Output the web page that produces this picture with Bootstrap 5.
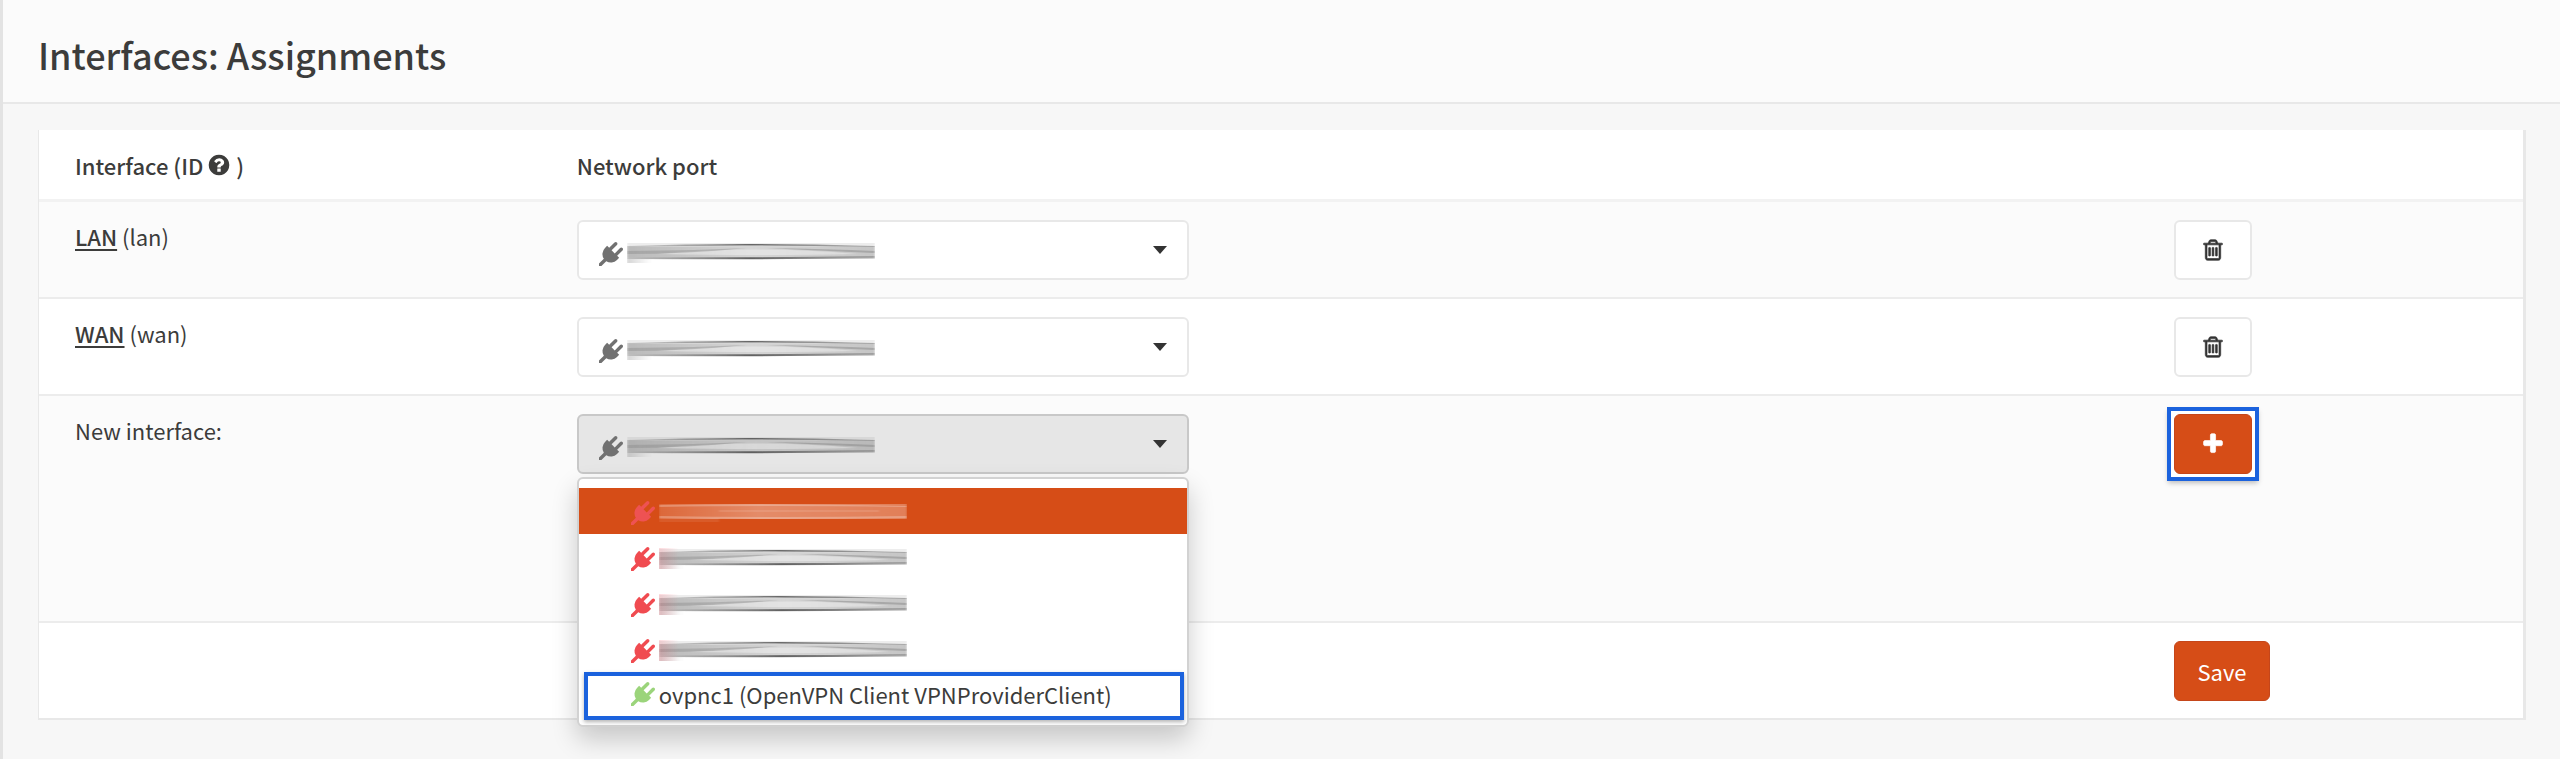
<!DOCTYPE html>
<html lang="en">
<head>
<meta charset="utf-8">
<meta name="viewport" content="width=device-width, initial-scale=1">
<title>Interfaces: Assignments</title>
<link href="https://cdn.jsdelivr.net/npm/bootstrap@5.3.0/dist/css/bootstrap.min.css" rel="stylesheet">
<style>
  :root { --brand: #d64d17; --ink: #3c3c3b; --mark-blue: #1b62dd; }
  body {
    font-family: "Noto Sans CJK SC", "Noto Sans", sans-serif;
    font-size: 22px; line-height: 30px; color: var(--ink);
    background: #f7f7f7; border-left: 3px solid #e3e3e3; min-height: 100vh;
  }
  .page-head { background: #fbfbfb; border-bottom: 2px solid #e8e8e8; padding: 31px 35px 25px; }
  .page-head h1 { font-size: 36px; line-height: 46px; font-weight: 500; }
  .page-body { padding: 26px 34px 40px 35px; }
  .panel-box { background: #fff; border: solid #e8e8e8; border-width: 0 3px 2px 1px; }
  .assign { --bs-table-bg: transparent; color: var(--ink); table-layout: fixed; }
  .assign > :not(caption) > * > * { padding: 18px 0 17px 36px; border-color: #ececec; border-bottom-width: 2px; color: var(--ink); }
  .assign > thead > tr > th { padding-top: 20px; padding-bottom: 19px; font-weight: 500; border-bottom-width: 3px; border-color: #f2f2f2; }
  .assign > tbody > tr > td:first-child { padding-top: 19px; }
  .assign > tbody > tr:nth-child(odd) { background: #fbfbfb; }
  .assign > tbody > tr:last-child > td { border-bottom-width: 0; }
  .col-name { width: 20.2%; }
  .col-port { width: 64.3%; }
  .fa-ico { width: 24px; height: 24px; fill: currentColor; flex: none; display: block; }
  .port-link { color: inherit; font-weight: 500; text-underline-offset: 3px; text-decoration-thickness: 2px; }
  .picker { width: 612px; max-width: 100%; }
  .picker .form-select, .note-field {
    height: 60px; border: 2px solid #e8e8e8; border-radius: 6px; font-size: 22px; box-shadow: none;
  }
  .picker .form-select {
    background-color: #fff; background-position: right 20px center; background-size: 14px 8px;
    background-image: url("data:image/svg+xml,%3Csvg xmlns='http://www.w3.org/2000/svg' viewBox='0 0 14 8' preserveAspectRatio='none'%3E%3Cpath d='M0 0h14L7 8z' fill='%23333'/%3E%3C/svg%3E");
  }
  .picker .form-select.is-open { background-color: #e6e6e6; border-color: #c8c8c8; }
  .picked { position: absolute; top: 22px; left: 22px; color: #717171; pointer-events: none; }
  .smear { width: 248px; height: 22px; display: block; }
  .note-field { width: 612px; max-width: 100%; border-color: #bdbdbd; margin-top: 44px; margin-bottom: 26px; }
  .port-menu {
    top: 63px; left: 0; width: 100%; padding: 9px 0 5px; font-size: 22px;
    border: 2px solid #d2d2d2; border-radius: 6px; box-shadow: 0 12px 26px rgba(0,0,0,.2);
  }
  .port-menu .dropdown-item { height: 46px; padding: 4px 0 0 52px; color: var(--ink); }
  .port-menu .dropdown-item.active { background: var(--brand); }
  .port-menu .marked { height: 48px; margin: 0 3px 0 5px; width: auto; padding: 0 0 4px 43px; border: 4px solid var(--mark-blue); box-shadow: 0 2px 4px rgba(0,0,0,.3); }
  .c-down { color: #f04b50; }
  .c-up { color: #9bd47b; }
  .active .c-down { color: #ee5253; }
  .btn-tool { height: 60px; width: 78px; border: 2px solid #e8e8e8; border-radius: 6px; background: #fff; color: #333; padding: 0; }
  .btn-tool .fa-ico { stroke: currentColor; stroke-width: 50; }
  .btn-brand { background: var(--brand); border: 1px solid #c5461a; border-radius: 6px; color: #fff; }
  .btn-save { height: 60px; width: 96px; padding: 0; font-size: 22px; }
  .halo { width: 78px; background: #fff; outline: 4px solid var(--mark-blue); outline-offset: 3px; box-shadow: 0 0 0 3px #fff, 0 3px 5px 6px rgba(0,0,0,.25); }
</style>
</head>
<body>
<svg class="d-none" aria-hidden="true">
  <defs>
    <symbol id="plug" viewBox="0 0 1792 1792"><path d="M1755 453q37 38 37 90.500t-37 90.500l-401 400 150 150-160 160q-163 163-389.500 186.500t-411.500-100.500l-362 362h-181v-181l362-362q-124-185-100.500-411.500t186.500-389.500l160-160 150 150 400-401q38-37 91-37t90 37 37 90.500-37 90.500l-400 401 234 234 401-400q38-37 91-37t90 37z"/></symbol>
    <symbol id="trash" viewBox="0 0 1792 1792"><path d="M704 736v576q0 14-9 23t-23 9h-64q-14 0-23-9t-9-23v-576q0-14 9-23t23-9h64q14 0 23 9t9 23zm256 0v576q0 14-9 23t-23 9h-64q-14 0-23-9t-9-23v-576q0-14 9-23t23-9h64q14 0 23 9t9 23zm256 0v576q0 14-9 23t-23 9h-64q-14 0-23-9t-9-23v-576q0-14 9-23t23-9h64q14 0 23 9t9 23zm128 724v-948h-896v948q0 22 7 40.500t14.500 27 10.500 8.500h832q3 0 10.500-8.500t14.500-27 7-40.500zm-672-1076h448l-48-117q-7-9-17-11h-317q-10 2-17 11zm928 32v64q0 14-9 23t-23 9h-96v948q0 83-47 143.500t-113 60.500h-832q-66 0-113-58.500t-47-141.500v-952h-96q-14 0-23-9t-9-23v-64q0-14 9-23t23-9h309l70-167q15-37 54-63t79-26h320q40 0 79 26t54 63l70 167h309q14 0 23 9t9 23z"/></symbol>
    <symbol id="plus" viewBox="0 0 1792 1792"><path d="M1600 736v192q0 40-28 68t-68 28h-416v416q0 40-28 68t-68 28h-192q-40 0-68-28t-28-68v-416h-416q-40 0-68-28t-28-68v-192q0-40 28-68t68-28h416v-416q0-40 28-68t68-28h192q40 0 68 28t28 68v416h416q40 0 68 28t28 68z"/></symbol>
    <symbol id="question" viewBox="0 0 1792 1792"><path d="M1024 1376v-192q0-14-9-23t-23-9h-192q-14 0-23 9t-9 23v192q0 14 9 23t23 9h192q14 0 23-9t9-23zm256-672q0-88-55.500-163t-138.500-116-170-41q-243 0-371 213-15 24 8 42l132 100q7 6 19 6 16 0 25-12 53-68 86-92 34-24 86-24 48 0 85.500 26t37.500 59q0 38-20 61t-68 45q-63 28-115.500 86.500t-52.500 125.500v36q0 14 9 23t23 9h192q14 0 23-9t9-23q0-19 21.500-49.500t54.500-49.500q32-18 49-28.500t46-35 44.500-48 28-60.500 12.500-81zm384 192q0 209-103 385.500t-279.500 279.500-385.500 103-385.500-103-279.500-279.500-103-385.500 103-385.500 279.500-279.500 385.500-103 385.500 103 279.500 279.500 103 385.500z"/></symbol>
  </defs>
</svg>
<!-- Gradients and shape of the hidden port names -->
<svg width="0" height="0" class="position-absolute" aria-hidden="true">
  <defs>
    <filter id="soft" x="-2%" y="-20%" width="104%" height="140%"><feGaussianBlur stdDeviation="1 .6"/></filter>
    <linearGradient id="fadeEnd"><stop offset="0" stop-color="#888" stop-opacity=".35"/><stop offset=".5" stop-color="#888" stop-opacity="0"/><stop offset="1" stop-color="#888" stop-opacity=".2"/></linearGradient>
    <linearGradient id="fadeMid"><stop offset="0" stop-color="#666" stop-opacity=".2"/><stop offset=".5" stop-color="#444" stop-opacity=".8"/><stop offset="1" stop-color="#666" stop-opacity=".4"/></linearGradient>
    <linearGradient id="fadeTail"><stop offset="0" stop-color="#888" stop-opacity=".35"/><stop offset=".3" stop-color="#888" stop-opacity="0"/></linearGradient>
    <linearGradient id="fadeRed"><stop offset="0" stop-color="#f05060" stop-opacity=".22"/><stop offset=".08" stop-color="#f05060" stop-opacity="0"/></linearGradient>
    <linearGradient id="fadeLight"><stop offset="0" stop-color="#fff" stop-opacity=".15"/><stop offset=".4" stop-color="#fff" stop-opacity=".35"/><stop offset="1" stop-color="#fff" stop-opacity=".28"/></linearGradient>
    <symbol id="smear-dark" viewBox="0 0 248 22">
      <g filter="url(#soft)">
        <path d="M0 4h248v13H0z" fill="#888" opacity=".35"/>
        <path d="M0 1h248v3H0z" fill="#888" opacity=".15"/>
        <path d="M0 5h248v10H0z" fill="url(#fadeEnd)"/>
        <path d="M0 4Q110 0 248 4v1Q110 2 0 5z" fill="url(#fadeMid)"/>
        <path d="M30 12Q130 3 230 12q-90 2-200 0z" fill="#fff" opacity=".35"/>
        <path d="M0 15Q120 16 248 14v2Q120 18 0 17z" fill="url(#fadeMid)"/>
        <path d="M140 6Q200 7 248 9v2Q200 9 140 6z" fill="#888" opacity=".5"/>
        <path d="M0 9Q60 9 120 6Q60 12 0 12z" fill="#888" opacity=".4"/>
        <path d="M0 17h80v4H0z" fill="url(#fadeTail)"/>
      </g>
    </symbol>
    <symbol id="smear-light" viewBox="0 0 248 22">
      <g filter="url(#soft)">
        <path d="M0 2h248v15H0z" fill="url(#fadeLight)"/>
        <path d="M0 3Q110 1 248 4v1Q110 3 0 5zM0 14Q120 16 248 14v2Q120 18 0 16z" fill="#fff" opacity=".25"/>
        <path d="M60 8h160v2H60z" fill="#fff" opacity=".1"/>
        <path d="M0 16h60v4H0z" fill="#fff" opacity=".08"/>
      </g>
    </symbol>
  </defs>
</svg>

<header class="page-head"><h1 class="m-0">Interfaces: Assignments</h1></header>

<main class="page-body">
  <form class="panel-box">
    <table class="table assign mb-0">
      <colgroup><col class="col-name"><col class="col-port"><col></colgroup>
      <thead>
        <tr>
          <th scope="col"><span class="d-flex align-items-center">Interface (ID<svg class="fa-ico ms-1" role="img" aria-label="Help"><use href="#question"/></svg>&nbsp;)</span></th>
          <th scope="col">Network port</th>
          <th></th>
        </tr>
      </thead>
      <tbody>
        <tr>
          <td><a class="port-link" href="#lan">LAN</a> <label for="port-lan">(lan)</label></td>
          <td>
            <div class="picker position-relative">
              <select class="form-select" id="port-lan"><option></option></select>
              <span class="picked d-flex gap-1"><svg class="fa-ico"><use href="#plug"/></svg><svg class="smear"><use href="#smear-dark"/></svg></span>
            </div>
          </td>
          <td><button type="button" class="btn btn-tool d-flex align-items-center justify-content-center" aria-label="Delete LAN"><svg class="fa-ico"><use href="#trash"/></svg></button></td>
        </tr>
        <tr>
          <td><a class="port-link" href="#wan">WAN</a> <label for="port-wan">(wan)</label></td>
          <td>
            <div class="picker position-relative">
              <select class="form-select" id="port-wan"><option></option></select>
              <span class="picked d-flex gap-1"><svg class="fa-ico"><use href="#plug"/></svg><svg class="smear"><use href="#smear-dark"/></svg></span>
            </div>
          </td>
          <td><button type="button" class="btn btn-tool d-flex align-items-center justify-content-center" aria-label="Delete WAN"><svg class="fa-ico"><use href="#trash"/></svg></button></td>
        </tr>
        <tr>
          <td><label for="port-new">New interface:</label></td>
          <td>
            <div class="picker position-relative">
              <select class="form-select is-open" id="port-new"><option></option></select>
              <span class="picked d-flex gap-1"><svg class="fa-ico"><use href="#plug"/></svg><svg class="smear"><use href="#smear-dark"/></svg></span>
              <ul class="dropdown-menu port-menu show">
                <li><a class="dropdown-item active d-flex align-items-center gap-1" href="#p1"><svg class="fa-ico c-down"><use href="#plug"/></svg><svg class="smear"><use href="#smear-light"/></svg></a></li>
                <li><a class="dropdown-item d-flex align-items-center gap-1" href="#p2"><svg class="fa-ico c-down"><use href="#plug"/></svg><svg class="smear"><use href="#smear-dark"/><rect width="248" height="21" fill="url(#fadeRed)"/></svg></a></li>
                <li><a class="dropdown-item d-flex align-items-center gap-1" href="#p3"><svg class="fa-ico c-down"><use href="#plug"/></svg><svg class="smear"><use href="#smear-dark"/><rect width="248" height="21" fill="url(#fadeRed)"/></svg></a></li>
                <li><a class="dropdown-item d-flex align-items-center gap-1" href="#p4"><svg class="fa-ico c-down"><use href="#plug"/></svg><svg class="smear"><use href="#smear-dark"/><rect width="248" height="21" fill="url(#fadeRed)"/></svg></a></li>
                <li><a class="dropdown-item marked d-flex align-items-center gap-1" href="#ovpnc1"><svg class="fa-ico c-up"><use href="#plug"/></svg><span>ovpnc1 (OpenVPN Client VPNProviderClient)</span></a></li>
              </ul>
            </div>
            <input type="text" class="form-control note-field" aria-label="Description">
          </td>
          <td><div class="halo"><button type="button" class="btn btn-tool btn-brand d-flex align-items-center justify-content-center" aria-label="Add"><svg class="fa-ico"><use href="#plus"/></svg></button></div></td>
        </tr>
        <tr>
          <td></td>
          <td></td>
          <td><button type="submit" class="btn btn-brand btn-save d-block">Save</button></td>
        </tr>
      </tbody>
    </table>
  </form>
</main>
<script src="https://cdn.jsdelivr.net/npm/bootstrap@5.3.0/dist/js/bootstrap.bundle.min.js"></script>
</body>
</html>
